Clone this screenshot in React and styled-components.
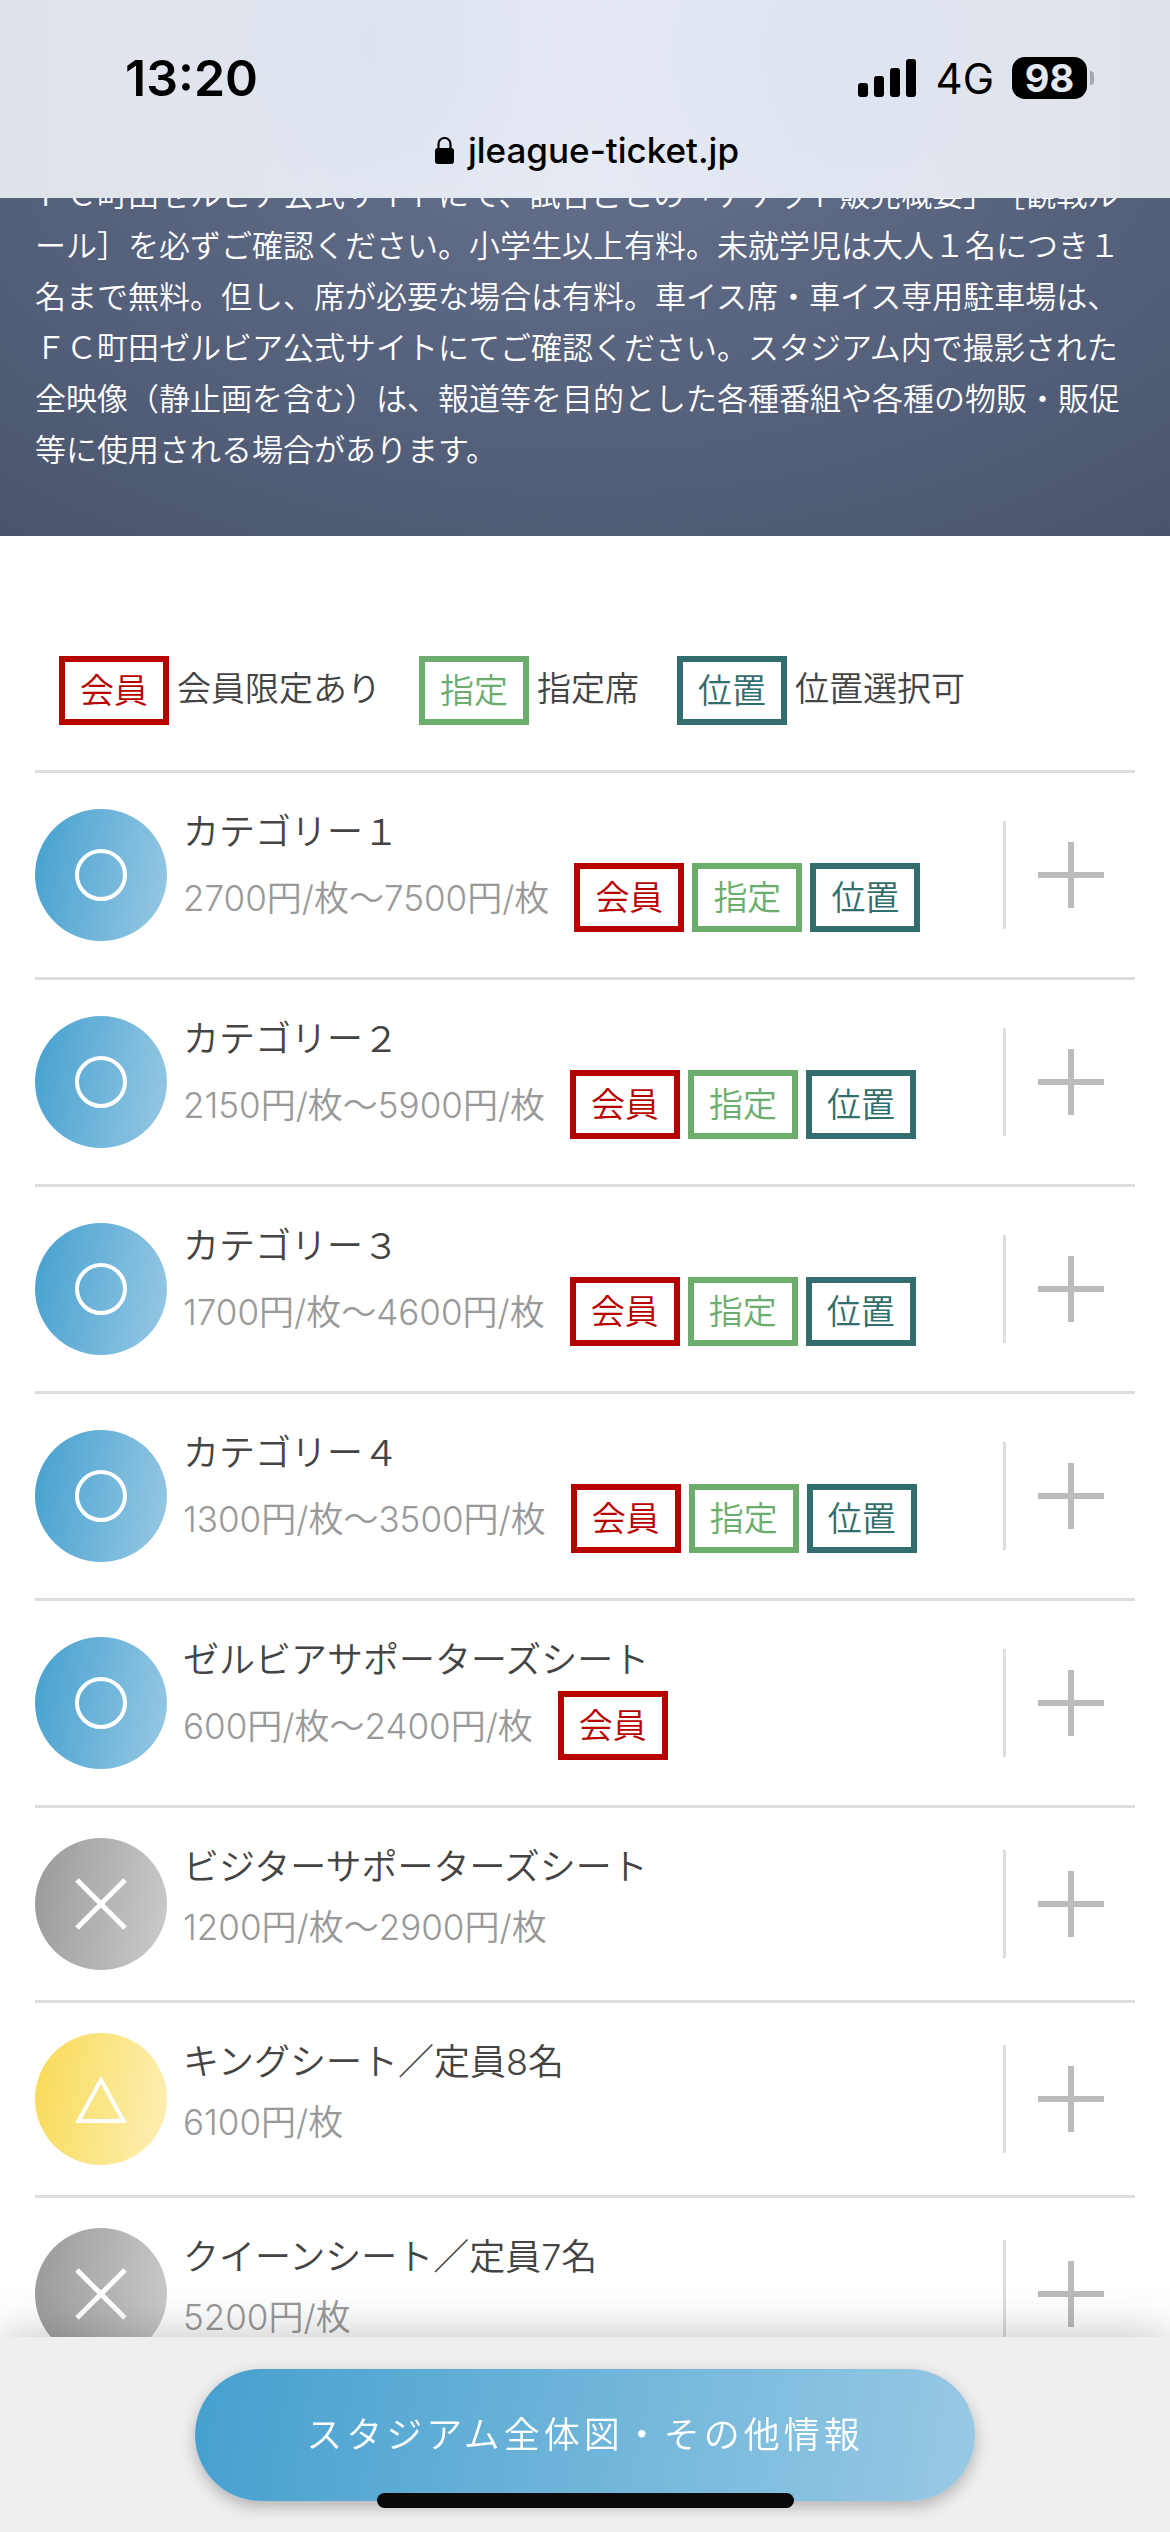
import React from 'react';
import styled, { createGlobalStyle, css } from 'styled-components';

const GlobalStyle = createGlobalStyle`
  *, *::before, *::after { box-sizing: border-box; }
  body {
    margin: 0;
    background: #fff;
    color: #444;
    font-family: Inter, "Noto Sans CJK JP", sans-serif;
    font-weight: 350;
    text-spacing-trim: space-all;
  }
`;

const TopBar = styled.header`
  position: fixed;
  inset: 0 0 auto;
  z-index: 2;
  height: 198px;
  padding: 48px 76px 0 125px;
  color: #000;
  background:
    radial-gradient(circle 280px at 32% 22%, rgba(216, 226, 238, 0.7), rgba(216, 226, 238, 0)),
    radial-gradient(circle 300px at 70% 28%, rgba(218, 228, 241, 0.7), rgba(218, 228, 241, 0)),
    linear-gradient(90deg, #e0e2e9, #e8ebf4 50%, #e0e2e9);
`;

const StatusRow = styled.div`
  display: flex;
  align-items: center;
  justify-content: space-between;
  height: 60px;
`;

const Clock = styled.time`
  font-size: 50px;
  font-weight: 600;
`;

const StatusIcons = styled.div`
  display: flex;
  align-items: center;
`;

const Network = styled.span`
  margin: 0 18px 0 20px;
  font-size: 42px;
  font-weight: 400;
`;

const Battery = styled.span`
  width: 75px;
  height: 42px;
  border-radius: 13px;
  background: #000;
  color: #e4e8f0;
  font-size: 38px;
  font-weight: 700;
  line-height: 42px;
  text-align: center;
`;

const BatteryTip = styled.span`
  width: 4px;
  height: 14px;
  margin-left: 3px;
  border-radius: 0 4px 4px 0;
  background: #a4a7ae;
`;

const Address = styled.div`
  display: flex;
  align-items: center;
  justify-content: center;
  gap: 14px;
  height: 84px;
  margin-right: 45px;
  font-size: 35px;
  font-weight: 500;
`;

const Notice = styled.section`
  padding: 169px 35px 61px;
  background: radial-gradient(ellipse 85% 110% at 50% 20%, #66728d, #55607b 55%, #48536a);
  color: #fff;
`;

const NoticeText = styled.p`
  margin: 0;
  font-size: 31px;
  line-height: 51px;
  line-break: anywhere;
`;

const Content = styled.main`
  padding: 120px 35px 195px;
`;

const Legend = styled.dl`
  display: flex;
  flex-wrap: wrap;
  gap: 38px;
  margin: 0;
  padding: 0 24px 45px;
`;

const LegendItem = styled.div`
  display: flex;
  align-items: flex-start;
  gap: 8px;
  font-size: 34px;
`;

const LegendText = styled.dd`
  margin: 0;
  line-height: 66px;
`;

const tagColors = { 会員: '#b90000', 指定: '#6cad6d', 位置: '#316e6d' };

const Tag = styled.span`
  display: block;
  height: 69px;
  padding: 0 15px;
  border: 6px solid ${(p) => tagColors[p.$kind]};
  color: ${(p) => tagColors[p.$kind]};
  font-size: 34px;
  line-height: 58px;
  white-space: nowrap;
`;

const SeatList = styled.ul`
  margin: 0;
  padding: 0;
  border-top: 3px solid #ddd;
  list-style: none;
`;

const SeatRow = styled.li`
  display: flex;
  align-items: center;
  border-bottom: 3px solid #ddd;
`;

const statusFill = {
  open: css`linear-gradient(100deg, #45a0cf, #98c9e4)`,
  few: css`linear-gradient(100deg, #f8da55, #fdf0b8)`,
  sold: css`linear-gradient(100deg, #999, #ccc)`,
};

const StatusDisc = styled.span`
  display: grid;
  place-items: center;
  flex: none;
  width: 132px;
  height: 132px;
  border-radius: 50%;
  background: ${(p) => statusFill[p.$status]};
`;

const SeatInfo = styled.div`
  flex: 1;
  min-width: 0;
  padding: 32px 0 45px 16px;
`;

const SeatName = styled.h2`
  margin: 0 0 4px;
  font-size: 36px;
  font-weight: 350;
  line-height: 54px;
`;

const PriceLine = styled.div`
  display: flex;
  align-items: center;
  gap: 25px;
`;

const Price = styled.span`
  padding-top: 1px;
  color: #999;
  font-size: 35px;
  line-height: 56px;
`;

const Tags = styled.span`
  display: flex;
  gap: 8px;
`;

const ExpandButton = styled.button`
  display: grid;
  place-items: center;
  flex: none;
  width: 132px;
  height: 108px;
  padding: 0;
  border: 0;
  border-left: 3px solid #ddd;
  background: none;
`;

const BottomBar = styled.footer`
  position: fixed;
  inset: auto 0 0;
  z-index: 2;
  display: flex;
  justify-content: center;
  padding: 32px 35px 31px;
  background: #efefef;
  box-shadow: 0 0 45px rgba(0, 0, 0, 0.25);
`;

const MapButton = styled.button`
  width: 780px;
  height: 132px;
  padding: 0 0 6px;
  border: 0;
  border-radius: 66px;
  background: linear-gradient(100deg, #45a0cf, #98c9e4);
  box-shadow: 0 6px 15px rgba(0, 0, 0, 0.25);
  color: #fff;
  font: inherit;
  font-size: 36px;
  letter-spacing: 4px;
`;

const HomeIndicator = styled.span`
  position: absolute;
  bottom: 24px;
  left: 50%;
  width: 417px;
  height: 15px;
  margin-left: -208px;
  border-radius: 8px;
  background: #0a0a0a;
`;

const marks = {
  open: <circle cx="26" cy="26" r="24" />,
  few: <path d="M26 7 L48.5 48 H3.5 Z" />,
  sold: <path d="M2 2 L50 50 M50 2 L2 50" strokeWidth="5" />,
};

const statusLabels = { open: '販売中', few: '残りわずか', sold: '完売' };

function StatusMark({ status }) {
  return (
    <StatusDisc $status={status}>
      <svg width="52" height="52" viewBox="0 0 52 52" fill="none" stroke="#fff" strokeWidth="4" role="img" aria-label={statusLabels[status]}>
        {marks[status]}
      </svg>
    </StatusDisc>
  );
}

const legend = [
  ['会員', '会員限定あり'],
  ['指定', '指定席'],
  ['位置', '位置選択可'],
];

const allTags = ['会員', '指定', '位置'];

const seats = [
  { name: 'カテゴリー１', price: '2700円/枚〜7500円/枚', status: 'open', tags: allTags },
  { name: 'カテゴリー２', price: '2150円/枚〜5900円/枚', status: 'open', tags: allTags },
  { name: 'カテゴリー３', price: '1700円/枚〜4600円/枚', status: 'open', tags: allTags },
  { name: 'カテゴリー４', price: '1300円/枚〜3500円/枚', status: 'open', tags: allTags },
  { name: 'ゼルビアサポーターズシート', price: '600円/枚〜2400円/枚', status: 'open', tags: ['会員'] },
  { name: 'ビジターサポーターズシート', price: '1200円/枚〜2900円/枚', status: 'sold', tags: [] },
  { name: 'キングシート／定員8名', price: '6100円/枚', status: 'few', tags: [] },
  { name: 'クイーンシート／定員7名', price: '5200円/枚', status: 'sold', tags: [] },
];

function Seat({ name, price, status, tags }) {
  return (
    <SeatRow>
      <StatusMark status={status} />
      <SeatInfo>
        <SeatName>{name}</SeatName>
        <PriceLine>
          <Price>{price}</Price>
          {tags.length > 0 && (
            <Tags>
              {tags.map((tag) => (
                <Tag key={tag} $kind={tag}>{tag}</Tag>
              ))}
            </Tags>
          )}
        </PriceLine>
      </SeatInfo>
      <ExpandButton type="button" aria-label={`${name}を開く`}>
        <svg width="66" height="66" viewBox="0 0 66 66" stroke="#bbb" strokeWidth="6" aria-hidden="true">
          <path d="M33 0 V66 M0 33 H66" />
        </svg>
      </ExpandButton>
    </SeatRow>
  );
}

export default function App() {
  return (
    <>
      <GlobalStyle />
      <TopBar>
        <StatusRow>
          <Clock>13:20</Clock>
          <StatusIcons>
            <svg width="58" height="38" viewBox="0 0 58 38" aria-hidden="true">
              <rect x="0" y="24" width="10" height="14" rx="3" />
              <rect x="16" y="17" width="10" height="21" rx="3" />
              <rect x="32" y="9" width="10" height="29" rx="3" />
              <rect x="48" y="0" width="10" height="38" rx="3" />
            </svg>
            <Network>4G</Network>
            <Battery>98</Battery>
            <BatteryTip />
          </StatusIcons>
        </StatusRow>
        <Address>
          <svg width="19" height="27" viewBox="0 0 19 27" aria-hidden="true">
            <rect x="0" y="11" width="19" height="16" rx="3" />
            <path d="M3.5 12 V7 a6 6 0 0 1 12 0 V12" fill="none" stroke="#000" strokeWidth="2.2" />
          </svg>
          jleague-ticket.jp
        </Address>
      </TopBar>

      <Notice>
        <NoticeText>
          ＦＣ町田ゼルビア公式サイトにて、試合ごとの「チケット販売概要」［観戦ルール］を必ずご確認ください。小学生以上有料。未就学児は大人１名につき１名まで無料。但し、席が必要な場合は有料。車イス席・車イス専用駐車場は、ＦＣ町田ゼルビア公式サイトにてご確認ください。スタジアム内で撮影された全映像（静止画を含む）は、報道等を目的とした各種番組や各種の物販・販促等に使用される場合があります。
        </NoticeText>
      </Notice>

      <Content>
        <Legend>
          {legend.map(([kind, text]) => (
            <LegendItem key={kind}>
              <Tag as="dt" $kind={kind}>{kind}</Tag>
              <LegendText>{text}</LegendText>
            </LegendItem>
          ))}
        </Legend>
        <SeatList>
          {seats.map((seat) => (
            <Seat key={seat.name} {...seat} />
          ))}
        </SeatList>
      </Content>

      <BottomBar>
        <MapButton type="button">スタジアム全体図・その他情報</MapButton>
        <HomeIndicator />
      </BottomBar>
    </>
  );
}
